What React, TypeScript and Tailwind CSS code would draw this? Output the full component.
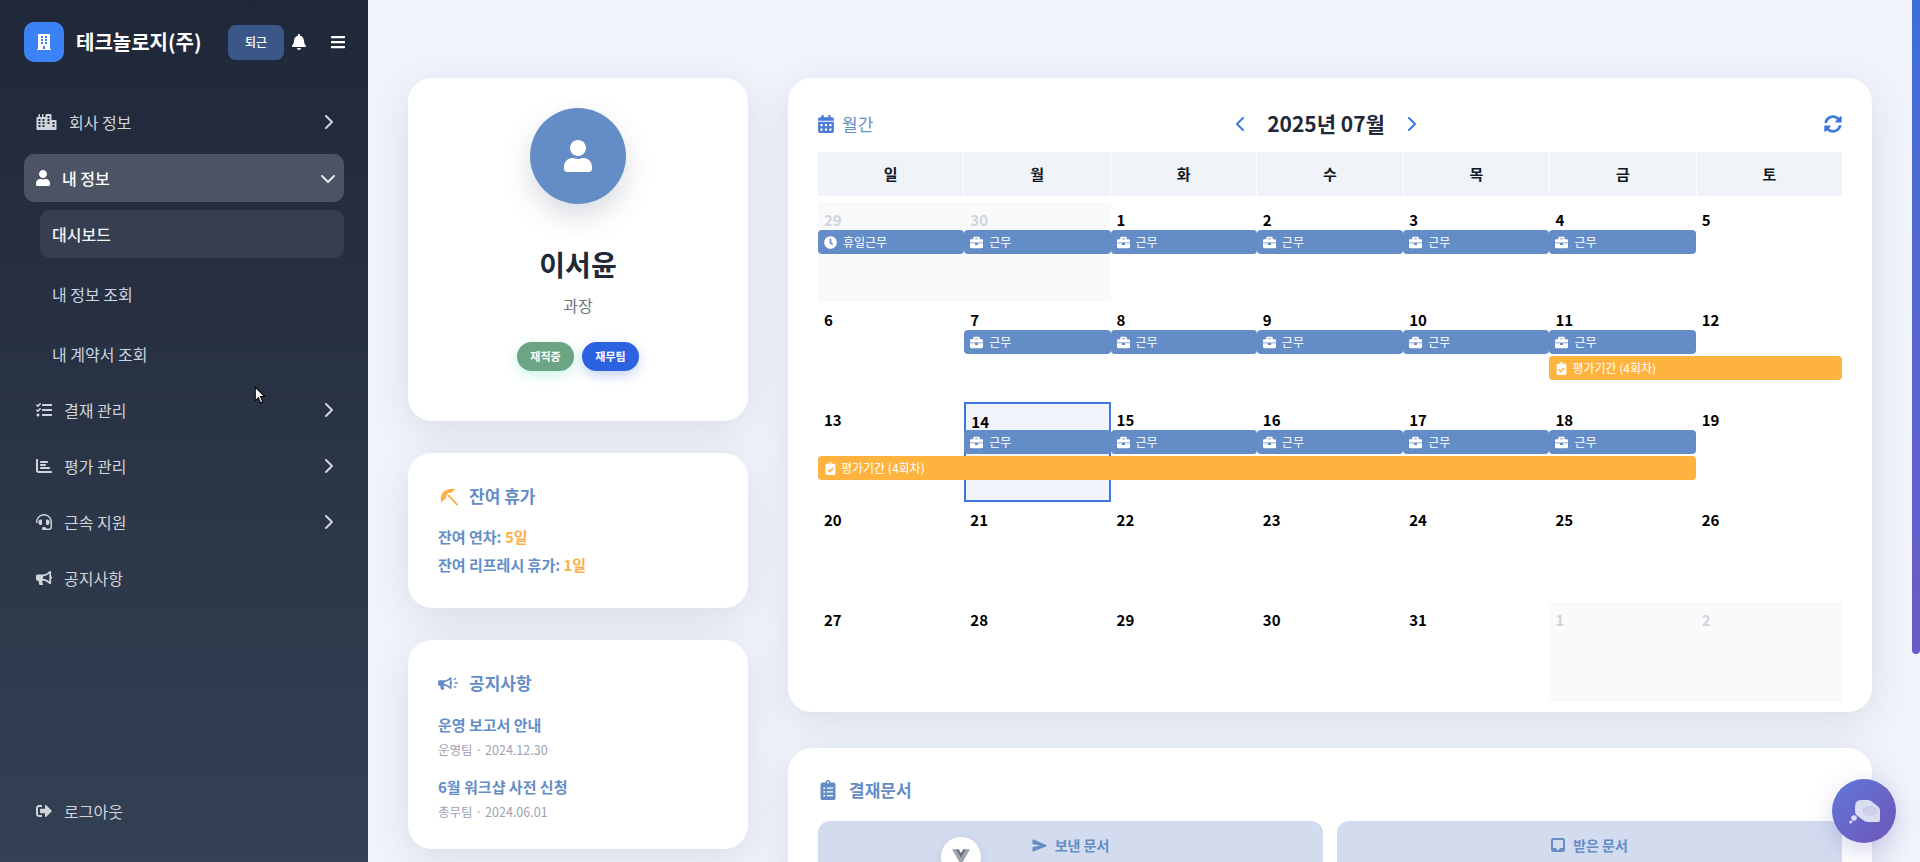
import {
  FaBars,
  FaBell,
  FaBriefcase,
  FaBuilding,
  FaBullhorn,
  FaCalendarAlt,
  FaCity,
  FaClipboardCheck,
  FaClipboardList,
  FaClock,
  FaHeadset,
  FaSignOutAlt,
  FaSyncAlt,
  FaTasks,
  FaUser,
} from "react-icons/fa";
import { FaChartBar, FaChevronDown, FaChevronLeft, FaChevronRight } from "react-icons/fa6";
import { IoSend } from "react-icons/io5";

const colStart: Record<number, string> = {
  1: "col-start-1",
  2: "col-start-2",
  3: "col-start-3",
  4: "col-start-4",
  5: "col-start-5",
  6: "col-start-6",
  7: "col-start-7",
};

const colEnd: Record<number, string> = {
  2: "col-end-2",
  3: "col-end-3",
  4: "col-end-4",
  5: "col-end-5",
  6: "col-end-6",
  7: "col-end-7",
  8: "col-end-8",
};

type Day = { n: number; muted?: boolean; today?: boolean };
type Bar = { from: number; to: number; label: string; kind: "work" | "holiday" | "eval" };

const workDays = (from: number, to: number): Bar[] => {
  const out: Bar[] = [];
  for (let c = from; c <= to; c++) out.push({ from: c, to: c, label: "근무", kind: "work" });
  return out;
};

const weeks: { days: Day[]; bars: Bar[]; evalBar?: Bar }[] = [
  {
    days: [{ n: 29, muted: true }, { n: 30, muted: true }, { n: 1 }, { n: 2 }, { n: 3 }, { n: 4 }, { n: 5 }],
    bars: [{ from: 1, to: 1, label: "휴일근무", kind: "holiday" }, ...workDays(2, 6)],
  },
  {
    days: [{ n: 6 }, { n: 7 }, { n: 8 }, { n: 9 }, { n: 10 }, { n: 11 }, { n: 12 }],
    bars: workDays(2, 6),
    evalBar: { from: 6, to: 7, label: "평가기간 (4회차)", kind: "eval" },
  },
  {
    days: [{ n: 13 }, { n: 14, today: true }, { n: 15 }, { n: 16 }, { n: 17 }, { n: 18 }, { n: 19 }],
    bars: workDays(2, 6),
    evalBar: { from: 1, to: 6, label: "평가기간 (4회차)", kind: "eval" },
  },
  {
    days: [{ n: 20 }, { n: 21 }, { n: 22 }, { n: 23 }, { n: 24 }, { n: 25 }, { n: 26 }],
    bars: [],
  },
  {
    days: [{ n: 27 }, { n: 28 }, { n: 29 }, { n: 30 }, { n: 31 }, { n: 1, muted: true }, { n: 2, muted: true }],
    bars: [],
  },
];

const weekdays = ["일", "월", "화", "수", "목", "금", "토"];

const cardClass = "rounded-3xl bg-white shadow-[0_10px_40px_rgba(50,60,100,0.13)]";

function MenuItem({ icon, label, open, active }: { icon: React.ReactNode; label: string; open?: boolean; active?: boolean }) {
  return (
    <div
      className={`flex h-12 items-center rounded-[10px] pl-3 pr-2 text-[16px] ${
        active ? "bg-[#4c5364] font-medium text-white" : "text-[#d1d5db]"
      }`}
    >
      <span className="mr-3 flex items-center text-[16px]">{icon}</span>
      <span className="flex-1">{label}</span>
      {open === undefined ? null : open ? (
        <FaChevronDown className="text-[16px] text-[#e5e7eb]" />
      ) : (
        <FaChevronRight className="text-[16px] text-[#d1d5db]" />
      )}
    </div>
  );
}

function Sidebar() {
  return (
    <aside className="flex h-full w-[368px] shrink-0 flex-col bg-gradient-to-b from-[#1f2838] to-[#344054] px-6">
      <div className="flex h-[84px] items-center">
        <div className="flex h-10 w-10 items-center justify-center rounded-[10px] bg-[#3b82f6] text-white">
          <FaBuilding className="text-[16px]" />
        </div>
        <span className="ml-3 text-[20px] font-bold text-white">테크놀로지(주)</span>
        <div className="ml-auto flex h-[35px] w-14 items-center justify-center rounded-lg bg-[#3b5788] text-[12px] font-medium text-white">
          퇴근
        </div>
        <FaBell className="ml-[7px] text-[16px] text-white" />
        <FaBars className="ml-[23px] -mr-[2px] text-[16px] text-white" />
      </div>
      <div className="mt-[14px] flex flex-col">
        <MenuItem icon={<FaCity className="w-[21px] text-[16px]" />} label="회사 정보" open={false} />
        <div className="mt-2">
          <MenuItem icon={<FaUser className="-mx-px text-[16px]" />} label="내 정보" open active />
        </div>
        <div className="ml-4 mt-2 flex flex-col text-[16px]">
          <div className="flex h-12 items-center rounded-[10px] bg-[#363e50] px-3 font-medium text-[#f3f4f6]">대시보드</div>
          <div className="mt-3 flex h-12 items-center px-3 text-[#cbd5e1]">내 정보 조회</div>
          <div className="mt-3 flex h-12 items-center px-3 text-[#cbd5e1]">내 계약서 조회</div>
        </div>
        <div className="mt-2">
          <MenuItem icon={<FaTasks />} label="결재 관리" open={false} />
        </div>
        <div className="mt-2">
          <MenuItem icon={<FaChartBar />} label="평가 관리" open={false} />
        </div>
        <div className="mt-2">
          <MenuItem icon={<FaHeadset />} label="근속 지원" open={false} />
        </div>
        <div className="mt-2">
          <MenuItem icon={<FaBullhorn />} label="공지사항" />
        </div>
      </div>
      <div className="mt-auto mb-[27px]">
        <MenuItem icon={<FaSignOutAlt />} label="로그아웃" />
      </div>
    </aside>
  );
}

function ProfileCard() {
  return (
    <section className={`flex h-[343px] flex-col items-center pt-[30px] ${cardClass}`}>
      <div className="flex h-24 w-24 items-center justify-center rounded-full bg-[#648dc7] text-[32px] text-white shadow-[0_12px_28px_rgba(40,60,90,0.18)]">
        <FaUser />
      </div>
      <h2 className="mt-[38px] text-[28px] leading-[44px] font-bold text-[#1f2937]">이서윤</h2>
      <p className="mt-[7px] text-[16px] leading-6 text-[#6b7280]">과장</p>
      <div className="mt-[25px] flex gap-2">
        <span className="flex h-[29px] w-[57px] items-center justify-center rounded-full bg-[#6ba583] text-[11px] font-bold text-white shadow-[0_4px_12px_rgba(80,220,170,0.3)]">
          재직중
        </span>
        <span className="flex h-[29px] w-[57px] items-center justify-center rounded-full bg-[#2a62df] text-[11px] font-bold text-white shadow-[0_4px_12px_rgba(60,100,220,0.3)]">
          재무팀
        </span>
      </div>
    </section>
  );
}

function VacationCard() {
  return (
    <section className={`h-[155px] px-[30px] pt-[30px] ${cardClass}`}>
      <h3 className="flex items-center text-[17px] leading-[26px] font-bold text-[#648dc7]">
        {/* 기울어진 우산 */}
        <svg viewBox="0 0 20 20" className="ml-[2px] mr-[10px] h-[19px] w-[19px] text-[#fdb04a]">
          <path d="M1.500 16C-1.500 8 4.500.5 16 2L11.500 6.500 9 6 6.500 9 6.500 11.500z" fill="currentColor" />
          <path d="M9 9l9 9.500" stroke="currentColor" strokeWidth="2" strokeLinecap="round" />
        </svg>
        잔여 휴가
      </h3>
      <p className="mt-[17px] text-[15px] leading-[22px] font-semibold text-[#648dc7]">
        잔여 연차: <span className="text-[#fdb04a]">5일</span>
      </p>
      <p className="mt-[6px] text-[15px] leading-[22px] font-semibold text-[#648dc7]">
        잔여 리프레시 휴가: <span className="text-[#fdb04a]">1일</span>
      </p>
    </section>
  );
}

function NoticeCard() {
  return (
    <section className={`h-[209px] px-[30px] pt-[30px] ${cardClass}`}>
      <h3 className="flex items-center text-[17px] leading-[26px] font-bold text-[#648dc7]">
        <span className="mr-[11px] flex w-5 items-center">
          <FaBullhorn className="text-[15px]" />
          <svg viewBox="0 0 6 14" className="ml-[1px] h-[14px] w-[5px]">
            <path d="M1 3 4 1M2 7h4M1 11l3 2" stroke="currentColor" strokeWidth="1.6" fill="none" />
          </svg>
        </span>
        공지사항
      </h3>
      <p className="mt-[18px] text-[15px] leading-[22px] font-semibold text-[#648dc7]">운영 보고서 안내</p>
      <p className="mt-[5px] text-[12.5px] leading-[18px] text-[#9ca3af]">운영팀 · 2024.12.30</p>
      <p className="mt-[17px] text-[15px] leading-[22px] font-semibold text-[#648dc7]">6월 워크샵 사전 신청</p>
      <p className="mt-[5px] text-[12.5px] leading-[18px] text-[#9ca3af]">총무팀 · 2024.06.01</p>
    </section>
  );
}

function EventBar({ bar, row }: { bar: Bar; row: string }) {
  const color = bar.kind === "eval" ? "bg-[#ffb33f]" : "bg-[#648dc7]";
  const Icon = bar.kind === "eval" ? FaClipboardCheck : bar.kind === "holiday" ? FaClock : FaBriefcase;
  const gap = bar.kind === "eval" ? "mr-[4px]" : "mr-[6px]";
  return (
    <div
      className={`${row} ${colStart[bar.from]} ${colEnd[bar.to + 1]} flex items-center overflow-hidden rounded-[4px] pl-[6px] text-[12px] text-white ${color}`}
    >
      <Icon className={`${gap} text-[13px]`} />
      {bar.label}
    </div>
  );
}

function Calendar() {
  return (
    <section className={`h-[634px] px-[30px] pt-[30px] ${cardClass}`}>
      <div className="relative flex h-8 items-center justify-center">
        <div className="absolute left-0 flex items-center text-[17px] text-[#648dc7]">
          <FaCalendarAlt className="-ml-px mr-[7px] text-[18px] text-[#4a7bd8]" />
          월간
        </div>
        <div className="mr-2 flex items-center">
          <FaChevronLeft className="text-[16px] text-[#3f78dc]" />
          <span className="mx-[18px] text-[21px] font-bold text-[#1f2937]">2025년 07월</span>
          <FaChevronRight className="text-[16px] text-[#3f78dc]" />
        </div>
        <FaSyncAlt className="absolute right-0 text-[18px] text-[#3f78dc]" />
      </div>
      <div className="mt-3 grid h-11 grid-cols-7 gap-x-[1px]">
        {weekdays.map((d) => (
          <div key={d} className="flex items-center justify-center bg-[#f0f3f8] text-[15px] font-bold text-[#111827]">
            {d}
          </div>
        ))}
      </div>
      <div className="mt-[6px] flex flex-col">
        {weeks.map((w) => (
          <div key={w.days[0].n} className="grid h-[100px] grid-cols-7 grid-rows-[28px_24px_2px_24px_1fr]">
            {w.days.map((d, i) => (
              <div
                key={i}
                className={`${colStart[i + 1]} row-start-1 row-end-6 text-[15px] leading-[36px] font-semibold ${
                  d.today
                    ? "border-2 border-[#3f78dc] bg-[#f0f3fa] pl-[5px] text-black"
                    : d.muted
                      ? "bg-[#f9fafc] pl-[6px] text-[#d1d5db]"
                      : "pl-[6px] text-black"
                }`}
              >
                {d.n}
              </div>
            ))}
            {w.bars.map((b) => (
              <EventBar key={b.from} bar={b} row="row-start-2" />
            ))}
            {w.evalBar && <EventBar bar={w.evalBar} row="row-start-4" />}
          </div>
        ))}
      </div>
    </section>
  );
}

function DocumentCard() {
  return (
    <section className={`mt-9 h-[352px] px-[30px] pt-[30px] ${cardClass}`}>
      <h3 className="flex items-center text-[17px] leading-6 font-bold text-[#648dc7]">
        <FaClipboardList className="mr-[11px] text-[20px]" />
        결재문서
      </h3>
      <div className="mt-[19px] grid grid-cols-2 gap-[14px]">
        <div className="flex h-12 items-center justify-center rounded-t-xl bg-[#d3dcee] text-[14px] font-semibold text-[#648dc7]">
          <IoSend className="mr-2 text-[15px]" />
          보낸 문서
        </div>
        <div className="flex h-12 items-center justify-center rounded-t-xl bg-[#d3dcee] text-[14px] font-semibold text-[#648dc7]">
          <svg viewBox="0 0 14 14" className="mr-2 h-[14px] w-[14px]">
            <path
              fillRule="evenodd"
              d="M2.500 0h9A2.500 2.500 0 0 1 14 2.500v9a2.500 2.500 0 0 1-2.500 2.500h-9A2.500 2.500 0 0 1 0 11.500v-9A2.500 2.500 0 0 1 2.500 0zM2 2v8h3l1 2h2l1-2h3V2z"
              fill="currentColor"
            />
          </svg>
          받은 문서
        </div>
      </div>
    </section>
  );
}

export default function App() {
  return (
    <div className="relative flex h-screen overflow-hidden bg-[#f1f4fb] font-['Noto_Sans_CJK_KR','Noto_Sans',sans-serif]">
      <Sidebar />
      <main className="h-full min-w-0 flex-1 overflow-hidden">
        <div className="flex h-[1136px] gap-10 px-10 pt-[78px]">
          <div className="flex w-[340px] shrink-0 flex-col gap-8">
            <ProfileCard />
            <VacationCard />
            <NoticeCard />
          </div>
          <div className="min-w-0 flex-1">
            <Calendar />
            <DocumentCard />
          </div>
        </div>
      </main>
      {/* 스크롤바 */}
      <div className="h-full w-2 shrink-0">
        <div className="h-[654px] rounded-b-full bg-gradient-to-b from-[#3b6fd8] to-[#6a5ac8]" />
      </div>

      {/* 떠 있는 버튼들 */}
      <div className="absolute left-[941px] top-[837px] flex h-10 w-10 justify-center rounded-full bg-white pt-[12px] shadow-[0_2px_8px_rgba(0,0,0,0.1)]">
        <svg viewBox="0 0 24 21" className="h-[16px] w-[18px]">
          <path d="M0 0h5l7 12L19 0h5L12 21z" fill="#9ca3af" />
          <path d="M5 0h4l3 5 3-5h4l-7 12z" fill="#6b7280" />
        </svg>
      </div>
      <div className="absolute left-[1832px] top-[779px] flex h-16 w-16 items-center justify-center rounded-full bg-gradient-to-br from-[#5f78d8] to-[#6d55b8] shadow-[0_8px_24px_rgba(90,90,200,0.25)]">
        <svg viewBox="0 0 32 26" className="ml-[2px] h-[26px] w-[32px]">
          <path
            d="M12 2h7q3 0 5 2.500l5 4q2 1.500 2 4V22q0 2-2 2H19q-3 0-5-2l-4-3q-4-2-4-6.500V9q0-7 6-7z"
            fill="#d9dff0"
          />
          <ellipse cx="21" cy="13" rx="8" ry="5" fill="#cfcfe8" />
          <circle cx="5" cy="20" r="2.800" fill="#d9dff0" />
          <circle cx="1.800" cy="24" r="1.600" fill="#d9dff0" />
        </svg>
      </div>
      <svg viewBox="0 0 11 17" className="absolute left-[254px] top-[386px] h-[18px] w-3">
        <path d="M1 1v13l3-3 2 5 2-1-2-5h4z" fill="#fff" stroke="#000" strokeWidth="1" />
      </svg>
    </div>
  );
}
